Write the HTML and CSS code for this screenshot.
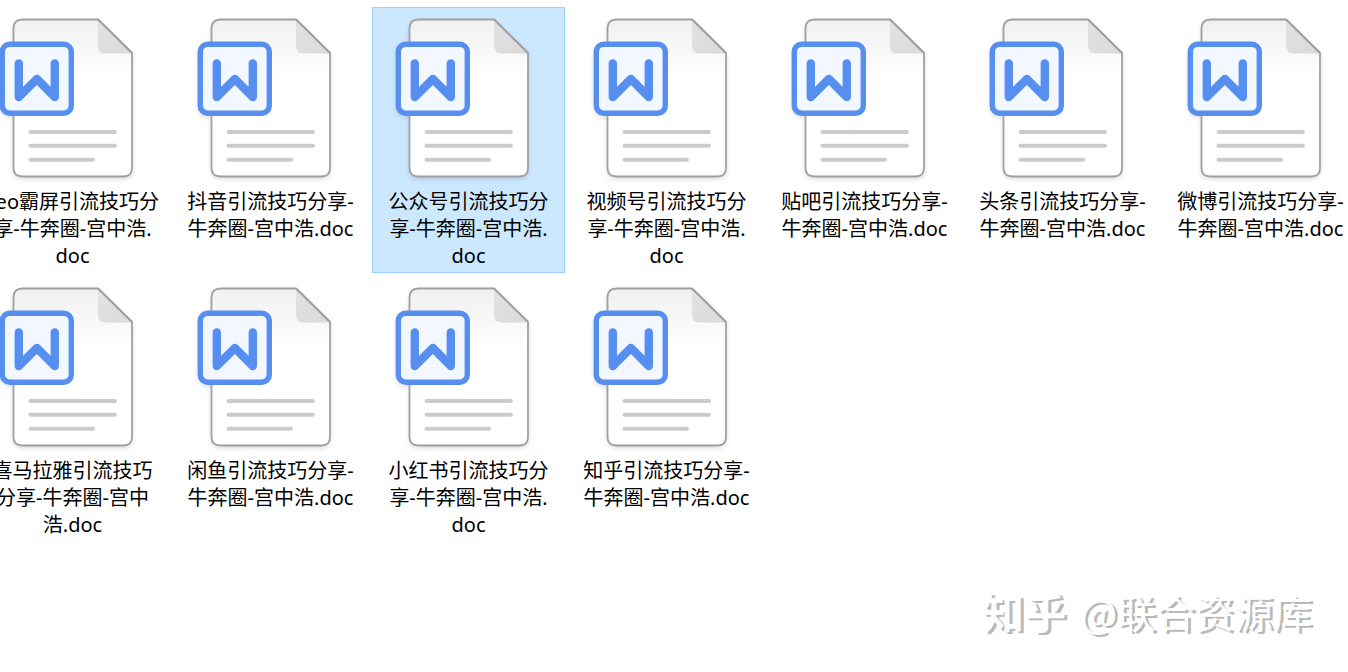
FILE: index.html
```
<!DOCTYPE html>
<html lang="zh-CN">
<head>
  <meta charset="UTF-8">
  <meta name="viewport" content="width=device-width, initial-scale=1.0">
  <title>引流技巧分享</title>
  <link rel="stylesheet" href="styles.css">
</head>
<body>
  <svg class="sprite" aria-hidden="true">
    <defs>
      <linearGradient id="paper" x1="0" y1="0" x2="0" y2="1">
        <stop offset="0" stop-color="#f0f0f0"/>
        <stop offset="0.38" stop-color="#ffffff"/>
      </linearGradient>
      <linearGradient id="fold" x1="0" y1="0" x2="1" y2="1">
        <stop offset="0" stop-color="#e2e2e2"/>
        <stop offset="1" stop-color="#dadada"/>
      </linearGradient>
    </defs>
    <symbol id="doc" viewBox="0 0 161 180">
      <path d="M30.5 11.5H106L140 45V160Q140 168.500 131.500 168.500H30.500Q21.500 168.500 21.500 160V20.500Q21.500 11.500 30.500 11.500Z" fill="url(#paper)" stroke="#a0a0a0" stroke-width="1.800" stroke-linejoin="round"/>
      <path d="M106 12.500V38Q106 45.500 113.500 45.500H139.200Z" fill="url(#fold)"/>
      <path d="M106 11.500L140 45" stroke="#a0a0a0" stroke-width="1.800"/>
      <path d="M38.500 124H123M38.500 137.800H123M38.500 151.700H101" stroke="#cbcbcb" stroke-width="4" stroke-linecap="round"/>
      <rect x="10.300" y="36.200" width="69" height="69" rx="7.500" fill="#f3f7ff" stroke="#568ff0" stroke-width="5.400"/>
      <path d="M26.800 55.500V89L44.900 71L62.800 89V55.500" fill="none" stroke="#568ff0" stroke-width="8.400" stroke-linecap="round" stroke-linejoin="round"/>
    </symbol>
  </svg>

  <main>
    <ul class="files">
      <li><a class="file" href="#"><svg class="icon"><use href="#doc"/></svg><span>seo霸屏引流技巧分<br>享-牛奔圈-宫中浩.<br>doc</span></a></li>
      <li><a class="file" href="#"><svg class="icon"><use href="#doc"/></svg><span>抖音引流技巧分享-<br>牛奔圈-宫中浩.doc</span></a></li>
      <li><a class="file selected" href="#"><svg class="icon"><use href="#doc"/></svg><span>公众号引流技巧分<br>享-牛奔圈-宫中浩.<br>doc</span></a></li>
      <li><a class="file" href="#"><svg class="icon"><use href="#doc"/></svg><span>视频号引流技巧分<br>享-牛奔圈-宫中浩.<br>doc</span></a></li>
      <li><a class="file" href="#"><svg class="icon"><use href="#doc"/></svg><span>贴吧引流技巧分享-<br>牛奔圈-宫中浩.doc</span></a></li>
      <li><a class="file" href="#"><svg class="icon"><use href="#doc"/></svg><span>头条引流技巧分享-<br>牛奔圈-宫中浩.doc</span></a></li>
      <li><a class="file" href="#"><svg class="icon"><use href="#doc"/></svg><span>微博引流技巧分享-<br>牛奔圈-宫中浩.doc</span></a></li>
      <li><a class="file" href="#"><svg class="icon"><use href="#doc"/></svg><span>喜马拉雅引流技巧<br>分享-牛奔圈-宫中<br>浩.doc</span></a></li>
      <li><a class="file" href="#"><svg class="icon"><use href="#doc"/></svg><span>闲鱼引流技巧分享-<br>牛奔圈-宫中浩.doc</span></a></li>
      <li><a class="file" href="#"><svg class="icon"><use href="#doc"/></svg><span>小红书引流技巧分<br>享-牛奔圈-宫中浩.<br>doc</span></a></li>
      <li><a class="file" href="#"><svg class="icon"><use href="#doc"/></svg><span>知乎引流技巧分享-<br>牛奔圈-宫中浩.doc</span></a></li>
    </ul>
  </main>
  <footer class="watermark"><b>知乎</b><span>@联合资源库</span></footer>
</body>
</html>
```
FILE: styles.css
```
* {
  box-sizing: border-box;
}
body {
  margin: 0;
  min-height: 100vh;
  display: flex;
  flex-direction: column;
  overflow: hidden;
  background-color: #fff;
  color: #000;
  font-family: "Noto Sans", "Noto Sans CJK SC", sans-serif;
}
.sprite {
  position: absolute;
  width: 0;
  height: 0;
}
.files {
  list-style: none;
  margin: 7px -16px 0 -24px;
  padding: 0;
  display: grid;
  grid-template-columns: repeat(auto-fill, 193px);
  gap: 3px 5px;
}
.file {
  display: flex;
  flex-direction: column;
  align-items: center;
  height: 100%;
  padding-bottom: 3px;
  border: 1px solid transparent;
  color: inherit;
  font-size: 20px;
  line-height: 27px;
  text-align: center;
  text-decoration: none;
  white-space: nowrap;
}
.file:hover {
  background-color: #e5f3ff;
}
.file.selected {
  background-color: #cce8ff;
  border-color: #99d1ff;
}
.icon {
  width: 161px;
  height: 180px;
  filter: drop-shadow(0 2px 2px rgba(0,0,0,0.12));
}
.watermark {
  display: flex;
  justify-content: flex-end;
  align-items: center;
  gap: 14px;
  margin-top: auto;
  padding: 0 36px 31px 0;
  font-family: "Noto Sans CJK SC", sans-serif;
  font-size: 39px;
  line-height: 60px;
  color: #fff;
  text-shadow: 3px 2px 0 #b9b9b9;
}
.watermark b {
  font-size: 42px;
  font-weight: 700;
}
```
